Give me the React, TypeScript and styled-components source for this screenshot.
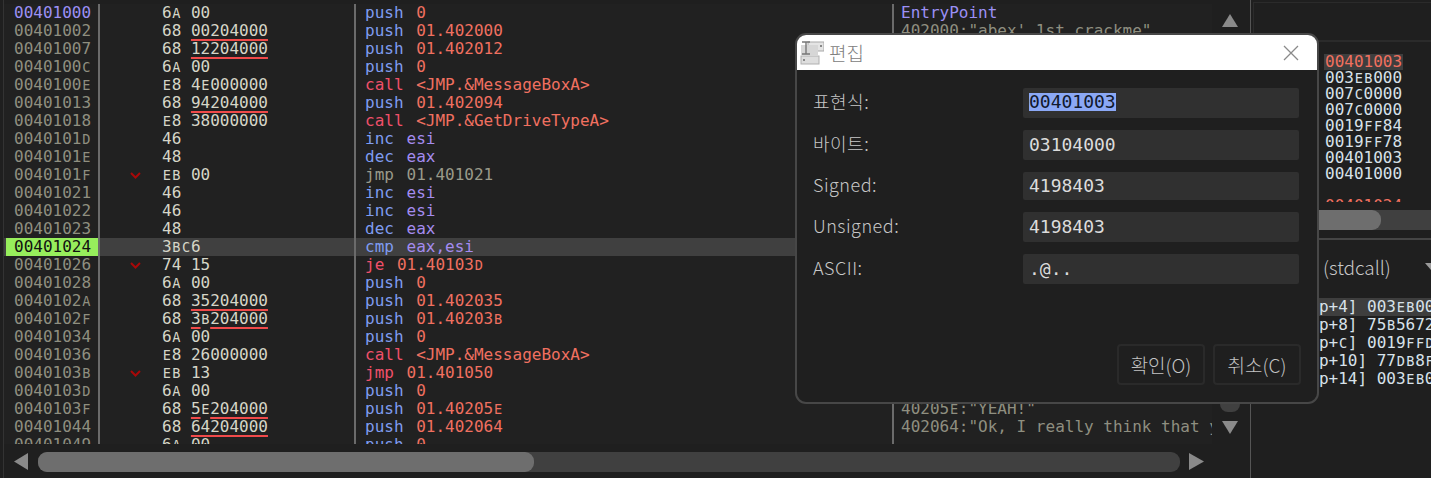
import React from "react";
import styled, { createGlobalStyle } from "styled-components";

const MONO = `"DejaVu Sans Mono", "Liberation Mono", monospace`;
const UI = `"Noto Sans CJK KR", "Noto Sans", sans-serif`;

const GlobalStyle = createGlobalStyle`
  html, body {
    margin: 0;
    padding: 0;
    background: #1f1f1f;
    overflow: hidden;
  }
`;

const Page = styled.div`
  position: relative;
  display: flex;
  width: 1431px;
  height: 478px;
  overflow: hidden;
  background: #1f1f1f;
  font-family: ${MONO};
  font-size: 16px;
`;

const LeftPane = styled.div`
  display: flex;
  flex-direction: column;
  width: 1248px;
  margin-left: 3px;
  padding-top: 4px;
  box-sizing: border-box;
  border-left: 1px solid #333;
  border-right: 1px solid #555;
`;

const DisasmArea = styled.div`
  display: flex;
  height: 440px;
`;

const Table = styled.div`
  width: 1208px;
  height: 440px;
  overflow: hidden;
  background: #212121;
`;

const Row = styled.div<{ $selected?: boolean }>`
  display: grid;
  grid-template-columns: 96px 256px 538px 318px;
  height: 18px;
  line-height: 18px;
  background: ${(p) => (p.$selected ? "#404040" : "transparent")};
`;

const AddrCell = styled.div<{ $tone?: "entry" | "current" }>`
  box-sizing: border-box;
  padding-left: ${(p) => (p.$tone === "current" ? "8px" : "10px")};
  margin-left: ${(p) => (p.$tone === "current" ? "2px" : "0")};
  border-right: 2px solid #6b6b6b;
  background: ${(p) => (p.$tone === "current" ? "#97ee5c" : "transparent")};
  color: ${(p) =>
    p.$tone === "entry" ? "#9c90f5" : p.$tone === "current" ? "#111" : "#8f8f80"};
`;

const BytesCell = styled.div`
  display: flex;
  align-items: center;
  box-sizing: border-box;
  padding-left: 30px;
  border-right: 2px solid #6b6b6b;
  color: #d6d6c8;
`;

const ArrowSlot = styled.span`
  display: flex;
  width: 32px;
  flex: none;
`;

const BytesText = styled.span`
  white-space: pre;
`;

const Patched = styled.span`
  text-decoration: underline;
  text-decoration-color: #f04a4a;
  text-decoration-thickness: 2px;
  text-underline-offset: 3px;
`;

const InstrCell = styled.div`
  box-sizing: border-box;
  padding-left: 9px;
  border-right: 2px solid #6b6b6b;
  white-space: pre;
`;

const Token = styled.span<{ $c: string }>`
  color: ${(p) => p.$c};
`;

const Mnemonic = styled(Token)`
  margin-right: 3px;
`;

const CommentCell = styled.div`
  box-sizing: border-box;
  padding-left: 7px;
  overflow: hidden;
  white-space: pre;
  color: #8f8f80;
`;

const SmallCap = styled.span`
  display: inline-block;
  width: 0.708em;
  font-size: 0.85em;
  text-align: center;
`;

const VerticalBar = styled.div`
  display: flex;
  flex-direction: column;
  align-items: center;
  width: 34px;
  padding: 9px 0 9px 0;
  box-sizing: border-box;
  margin-left: 1px;
`;

const VerticalThumb = styled.div`
  flex: 1;
  width: 20px;
  margin: 16px 0 8px;
  border-radius: 8px;
  background: #404040;
`;

const HorizontalBar = styled.div`
  display: flex;
  align-items: center;
  height: 20px;
  margin-top: 8px;
  padding-left: 9px;
`;

const HorizontalTrack = styled.div`
  width: 1142px;
  height: 20px;
  margin: 0 9px 0 9px;
  border-radius: 9px;
  background: #404040;
`;

const HorizontalThumb = styled.div`
  width: 496px;
  height: 20px;
  border-radius: 9px;
  background: #6e6e6e;
`;

const RightPane = styled.div`
  display: flex;
  flex-direction: column;
  flex: 1;
  min-width: 0;
`;

const DumpHeader = styled.div`
  height: 40px;
  margin: 2px 0 0 2px;
  border-top: 1px solid #2b2b2b;
  border-bottom: 2px solid #2b2b2b;
  border-left: 1px solid #2b2b2b;
  box-sizing: border-box;
`;

const StackList = styled.div`
  height: 148px;
  margin-top: 12px;
  overflow: hidden;
  padding-left: 73px;
  line-height: 16px;
  color: #d8e2ea;
`;

const StackRow = styled.div<{ $tone?: "top" | "ret" }>`
  width: 78px;
  height: 16px;
  padding-left: 1px;
  color: ${(p) => (p.$tone ? "#f2705f" : "inherit")};
  background: ${(p) => (p.$tone === "top" ? "#3e3e3e" : "transparent")};
`;

const StackScroll = styled.div`
  height: 20px;
  margin-top: 8px;
  background: #404040;
`;

const StackThumb = styled.div`
  width: 130px;
  height: 20px;
  border-radius: 0 9px 9px 0;
  background: #6e6e6e;
`;

const CallHeader = styled.div`
  display: flex;
  align-items: center;
  justify-content: space-between;
  height: 60px;
  margin-top: 8px;
  border-top: 2px solid #454545;
  box-sizing: border-box;
  padding: 0 0 6px 72px;
  font-family: ${UI};
  font-weight: 300;
  font-size: 19px;
  color: #c8c8c8;
`;

const Caret = styled.div`
  width: 0;
  height: 0;
  margin-right: -6px;
  border-left: 6px solid transparent;
  border-right: 6px solid transparent;
  border-top: 7px solid #9a9a9a;
`;

const CallList = styled.div`
  margin-left: 29px;
  line-height: 18px;
  color: #d8e2ea;
  white-space: pre;
  overflow: hidden;
`;

const CallRow = styled.div<{ $selected?: boolean }>`
  height: 18px;
  padding-left: 10px;
  background: ${(p) => (p.$selected ? "#3e3e3e" : "transparent")};
`;

const Dialog = styled.div`
  position: absolute;
  left: 795px;
  top: 33px;
  width: 524px;
  height: 371px;
  box-sizing: border-box;
  display: flex;
  flex-direction: column;
  border: 2px solid #474747;
  border-radius: 11px;
  background: #1f1f1f;
  overflow: hidden;
`;

const TitleBar = styled.div`
  display: flex;
  align-items: center;
  flex: none;
  height: 35px;
  padding: 0 18px 0 3px;
  background: #fff;
  font-family: ${UI};
  font-weight: 300;
  font-size: 19px;
  color: #808080;
`;

const TitleText = styled.span`
  margin-left: 5px;
  flex: 1;
`;

const Fields = styled.div`
  display: flex;
  flex-direction: column;
  gap: 12px;
  padding: 18px 18px 0 16px;
`;

const FieldRow = styled.div<{ $h?: number }>`
  display: flex;
  align-items: center;
  justify-content: space-between;
  height: ${(p) => p.$h ?? 30}px;
`;

const FieldLabel = styled.label`
  padding-bottom: 4px;
  font-family: ${UI};
  font-weight: 300;
  font-size: 18px;
  letter-spacing: 0.5px;
  color: #c8c8c8;
`;

const FieldValue = styled.div`
  display: flex;
  align-items: center;
  box-sizing: border-box;
  width: 276px;
  height: 100%;
  padding: 0 0 2px 6px;
  border-radius: 2px;
  background: #303030;
  font-family: ${MONO};
  font-size: 18px;
  color: #dcdcdc;
`;

const Selection = styled.span`
  background: #8ba8f5;
  color: #10182c;
  line-height: 18px;
`;

const DialogActions = styled.div`
  display: flex;
  justify-content: flex-end;
  gap: 8px;
  margin-top: auto;
  padding: 0 16px 17px 0;
`;

const DialogButton = styled.button`
  width: 88px;
  height: 41px;
  padding: 0;
  border: 2px solid #2a2a2a;
  border-radius: 4px;
  background: #1f1f1f;
  font-family: ${UI};
  font-weight: 300;
  font-size: 19px;
  color: #c4c4c4;
`;

// hex digits A-F are drawn as small capitals in the debugger font
function hex(text: string) {
  return text.split(/([A-F])/).map((part, i) =>
    /^[A-F]$/.test(part) ? <SmallCap key={i}>{part}</SmallCap> : part
  );
}

const C = {
  blue: "#7f9cf0",
  red: "#f0506a",
  salmon: "#f07060",
  purple: "#a48cf0",
  grey: "#9a9a8a",
};

interface Line {
  addr: string;
  op: string;
  arg?: string;
  patched?: boolean;
  jump?: boolean;
  mn: string;
  mnColor: string;
  operand: string;
  operandColor: string;
  comment?: React.ReactNode;
}

const push = (operand: string) => ({
  mn: "push",
  mnColor: C.blue,
  operand,
  operandColor: C.salmon,
});
const reg = (mn: string, operand: string) => ({
  mn,
  mnColor: C.blue,
  operand,
  operandColor: C.purple,
});
const call = (operand: string) => ({
  mn: "call",
  mnColor: C.red,
  operand,
  operandColor: C.salmon,
});

const lines: Line[] = [
  { addr: "00401000", op: "6A", arg: "00", ...push("0"), comment: <Token $c="#9c90f5">EntryPoint</Token> },
  { addr: "00401002", op: "68", arg: "00204000", patched: true, ...push("01.402000"), comment: <>402000:"abex' 1st crackme"</> },
  { addr: "00401007", op: "68", arg: "12204000", patched: true, ...push("01.402012") },
  { addr: "0040100C", op: "6A", arg: "00", ...push("0") },
  { addr: "0040100E", op: "E8", arg: "4E000000", ...call("<JMP.&MessageBoxA>") },
  { addr: "00401013", op: "68", arg: "94204000", patched: true, ...push("01.402094") },
  { addr: "00401018", op: "E8", arg: "38000000", ...call("<JMP.&GetDriveTypeA>") },
  { addr: "0040101D", op: "46", ...reg("inc", "esi") },
  { addr: "0040101E", op: "48", ...reg("dec", "eax") },
  { addr: "0040101F", op: "EB", arg: "00", jump: true, mn: "jmp", mnColor: C.grey, operand: "01.401021", operandColor: C.grey },
  { addr: "00401021", op: "46", ...reg("inc", "esi") },
  { addr: "00401022", op: "46", ...reg("inc", "esi") },
  { addr: "00401023", op: "48", ...reg("dec", "eax") },
  { addr: "00401024", op: "3BC6", ...reg("cmp", "eax,esi") },
  { addr: "00401026", op: "74", arg: "15", jump: true, mn: "je", mnColor: C.red, operand: "01.40103D", operandColor: C.salmon },
  { addr: "00401028", op: "6A", arg: "00", ...push("0") },
  { addr: "0040102A", op: "68", arg: "35204000", patched: true, ...push("01.402035") },
  { addr: "0040102F", op: "68", arg: "3B204000", patched: true, ...push("01.40203B") },
  { addr: "00401034", op: "6A", arg: "00", ...push("0") },
  { addr: "00401036", op: "E8", arg: "26000000", ...call("<JMP.&MessageBoxA>") },
  { addr: "0040103B", op: "EB", arg: "13", jump: true, mn: "jmp", mnColor: C.red, operand: "01.401050", operandColor: C.salmon },
  { addr: "0040103D", op: "6A", arg: "00", ...push("0") },
  { addr: "0040103F", op: "68", arg: "5E204000", patched: true, ...push("01.40205E"), comment: <>{hex("40205E")}:"YEAH!"</> },
  { addr: "00401044", op: "68", arg: "64204000", patched: true, ...push("01.402064"), comment: <>402064:"Ok, I really think that you</> },
  { addr: "00401049", op: "6A", arg: "00", ...push("0") },
];

const stack = ["00401003", "003EB000", "007C0000", "007C0000", "0019FF84", "0019FF78", "00401003", "00401000", "", "00401024"];

const callArgs = [
  "[esp+4] 003EB000",
  "[esp+8] 75B5672",
  "[esp+C] 0019FFD",
  "[esp+10] 77DB8F",
  "[esp+14] 003EB0",
];

const fields = [
  { label: "표현식:", value: "00401003", selected: true },
  { label: "바이트:", value: "03104000" },
  { label: "Signed:", value: "4198403", h: 28 },
  { label: "Unsigned:", value: "4198403" },
  { label: "ASCII:", value: ".@.." },
];

function JumpArrow() {
  return (
    <svg width="11" height="7" viewBox="0 0 11 7">
      <polyline points="1,1 5.5,5.5 10,1" fill="none" stroke="#a80808" strokeWidth="2" />
    </svg>
  );
}

function Triangle({ dir, size = 16 }: { dir: "up" | "down" | "left" | "right"; size?: number }) {
  const points = {
    up: "8,1 16,14 0,14",
    down: "0,1 16,1 8,14",
    left: "15,0 15,17 1,8.5",
    right: "0,0 0,17 15,8.5",
  }[dir];
  const vertical = dir === "up" || dir === "down";
  return (
    <svg width={size} height={vertical ? 15 : 18} viewBox={vertical ? "0 0 16 15" : "0 0 16 18"} style={{ flex: "none" }}>
      <polygon points={points} fill="#8a8a8a" />
    </svg>
  );
}

function FormIcon() {
  return (
    <svg width="24" height="24" viewBox="0 0 24 24">
      <rect x="8" y="1" width="16" height="9" fill="#e4e4e4" stroke="#a8a8a8" />
      <rect x="20" y="4" width="2" height="2" fill="#888" />
      <rect x="1" y="4" width="17" height="10" fill="#d6d6d6" />
      <rect x="1" y="15" width="18" height="8" fill="#dedede" stroke="#b0b0b0" />
      <rect x="3" y="18" width="2" height="2" fill="#888" />
      <path d="M2 1h8M6 1v12M2 13h8" fill="none" stroke="#777" strokeWidth="1.4" />
    </svg>
  );
}

function CloseIcon() {
  return (
    <svg width="16" height="16" viewBox="0 0 16 16">
      <path d="M1 1l14 14M15 1L1 15" stroke="#8a8a8a" strokeWidth="1.3" />
    </svg>
  );
}

export default function App() {
  return (
    <Page>
      <GlobalStyle />
      <LeftPane>
        <DisasmArea>
          <Table>
            {lines.map((l, i) => {
              const tone = i === 0 ? "entry" : l.addr === "00401024" ? "current" : undefined;
              return (
                <Row key={l.addr} $selected={l.addr === "00401024"}>
                  <AddrCell $tone={tone}>{hex(l.addr)}</AddrCell>
                  <BytesCell>
                    <ArrowSlot>{l.jump && <JumpArrow />}</ArrowSlot>
                    <BytesText>
                      {hex(l.op)}
                      {l.arg && " "}
                      {l.arg && (l.patched ? <Patched>{hex(l.arg)}</Patched> : hex(l.arg))}
                    </BytesText>
                  </BytesCell>
                  <InstrCell>
                    <Mnemonic $c={l.mnColor}>{l.mn}</Mnemonic>{" "}
                    <Token $c={l.operandColor}>
                      {l.operand.startsWith("<") ? l.operand : hex(l.operand)}
                    </Token>
                  </InstrCell>
                  <CommentCell>{l.comment}</CommentCell>
                </Row>
              );
            })}
          </Table>
          <VerticalBar>
            <Triangle dir="up" />
            <VerticalThumb />
            <Triangle dir="down" />
          </VerticalBar>
        </DisasmArea>
        <HorizontalBar>
          <Triangle dir="left" />
          <HorizontalTrack>
            <HorizontalThumb />
          </HorizontalTrack>
          <Triangle dir="right" />
        </HorizontalBar>
      </LeftPane>

      <RightPane>
        <DumpHeader />
        <StackList>
          {stack.map((s, i) => (
            <StackRow key={i} $tone={i === 0 ? "top" : i === 9 ? "ret" : undefined}>
              {hex(s)}
            </StackRow>
          ))}
        </StackList>
        <StackScroll>
          <StackThumb />
        </StackScroll>
        <CallHeader>
          (stdcall)
          <Caret />
        </CallHeader>
        <CallList>
          {callArgs.map((a, i) => (
            <CallRow key={a} $selected={i === 0}>
              {hex(a)}
            </CallRow>
          ))}
        </CallList>
      </RightPane>

      <Dialog>
        <TitleBar>
          <FormIcon />
          <TitleText>편집</TitleText>
          <CloseIcon />
        </TitleBar>
        <Fields>
          {fields.map((f) => (
            <FieldRow key={f.label} $h={f.h}>
              <FieldLabel>{f.label}</FieldLabel>
              <FieldValue>
                {f.selected ? <Selection>{f.value}</Selection> : f.value}
              </FieldValue>
            </FieldRow>
          ))}
        </Fields>
        <DialogActions>
          <DialogButton>확인(O)</DialogButton>
          <DialogButton>취소(C)</DialogButton>
        </DialogActions>
      </Dialog>
    </Page>
  );
}
